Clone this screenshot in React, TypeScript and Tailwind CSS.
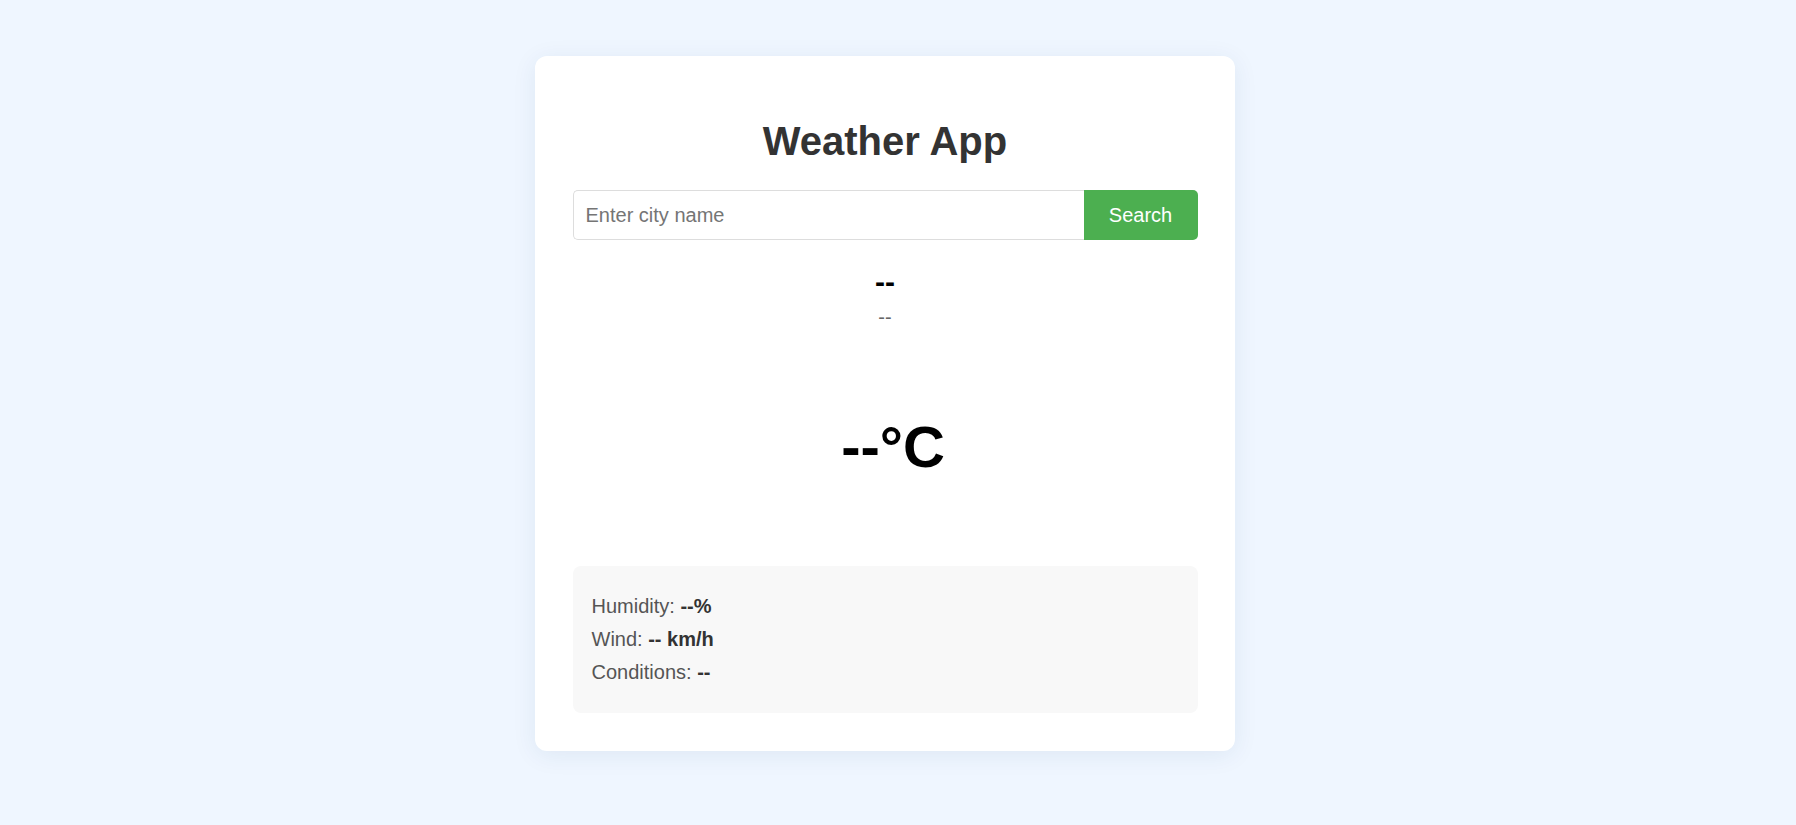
import { useState } from "react";

type Weather = {
  city: string;
  description: string;
  temp: string;
  humidity: string;
  wind: string;
  conditions: string;
};

const EMPTY: Weather = {
  city: "--",
  description: "--",
  temp: "--",
  humidity: "--",
  wind: "--",
  conditions: "--",
};

export default function App() {
  const [city, setCity] = useState("");
  const [weather] = useState<Weather>(EMPTY);

  return (
    <div
      className="min-h-screen bg-[#eff6ff] flex justify-center pt-[56px] pr-[26px]"
      style={{ fontFamily: '"Liberation Sans", Arial, sans-serif' }}
    >
      <div className="w-[700px] h-fit bg-white rounded-[12px] p-[37.5px] shadow-[0_4px_24px_rgba(30,64,120,0.08)]">
        <h1 className="mt-[24px] text-center text-[40px] leading-[46px] font-bold text-[#333]">
          Weather App
        </h1>

        <div className="flex mt-[26.5px] h-[50px]">
          <input
            type="text"
            value={city}
            onChange={(e) => setCity(e.target.value)}
            placeholder="Enter city name"
            className="flex-1 min-w-0 px-[12px] text-[20px] text-[#333] border border-[#dddddd] border-r-0 rounded-l-[5px] outline-none placeholder:text-[#757575]"
          />
          <button className="w-[114px] bg-[#4caf50] text-white text-[20px] rounded-r-[5px]">
            Search
          </button>
        </div>

        <div className="text-center">
          <h2 className="mt-[24.5px] text-[30px] leading-[34.5px] font-bold text-black">
            {weather.city}
          </h2>
          <p className="mt-[6.5px] text-[20px] leading-[23px] text-[#666]">
            {weather.description}
          </p>
          <div className="mt-[85px] pl-4 text-[58px] leading-[66.5px] font-bold text-black">
            {weather.temp}°C
          </div>
        </div>

        <div className="mt-[86px] bg-[#f8f8f8] rounded-[8px] px-[19px] py-[19px] text-[20px] leading-[23px] text-[#555]">
          <p className="my-[10px]">
            Humidity: <strong className="text-[#333]">{weather.humidity}%</strong>
          </p>
          <p className="my-[10px]">
            Wind: <strong className="text-[#333]">{weather.wind} km/h</strong>
          </p>
          <p className="my-[10px]">
            Conditions: <strong className="text-[#333]">{weather.conditions}</strong>
          </p>
        </div>
      </div>
    </div>
  );
}
